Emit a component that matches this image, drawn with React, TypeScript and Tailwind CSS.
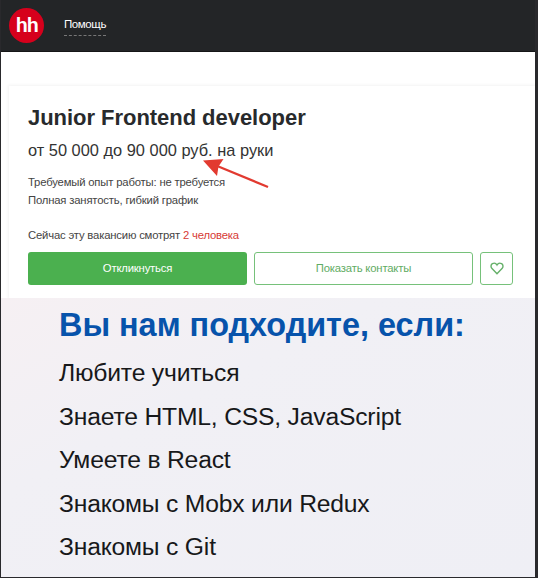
import React from "react";

function Logo() {
  return (
    <div className="flex size-[35px] shrink-0 items-center justify-center rounded-full bg-[#d6001c]">
      <span className="pl-px font-['Roboto',sans-serif] text-[21px] font-semibold leading-none tracking-[-0.7px] text-white">
        hh
      </span>
    </div>
  );
}

function Header() {
  return (
    <header className="flex h-[52px] shrink-0 items-start border-b border-[#151617] bg-[#232527] pl-2 pt-2">
      <Logo />
      <a className="ml-5 mt-2 h-5 border-b border-dashed border-[#777] text-[11.5px] leading-4 tracking-[-0.4px] text-white">
        Помощь
      </a>
    </header>
  );
}

function Arrow() {
  return (
    <svg
      className="absolute left-[191px] top-[71px]"
      width="72"
      height="34"
      viewBox="200 157 72 34"
      fill="none"
    >
      <path d="M216 165.5 268 187" stroke="#e23a30" strokeWidth="2.2" />
      <path d="M203 160.5 223.5 159 218.5 166.5 217 176Z" fill="#e23a30" />
    </svg>
  );
}

function Vacancy() {
  return (
    <section className="relative ml-2 mt-[34px] h-[212px] shrink-0 bg-white pl-[19px] shadow-[0_0_3px_1px_rgba(0,0,0,0.05)]">
      <h1 className="pt-[18px] text-[22px] font-bold leading-[28px] tracking-[-0.04px] text-[#282a2c]">
        Junior Frontend developer
      </h1>
      <p className="mt-[8px] text-[16.4px] leading-5 text-[#333]">от 50 000 до 90 000 руб. на руки</p>
      <p className="mt-[13px] text-[11.3px] leading-[18px] tracking-[-0.18px] text-[#444]">
        Требуемый опыт работы: не требуется
        <br />
        Полная занятость, гибкий график
      </p>
      <p className="mt-[17px] text-[11.3px] leading-[18px] tracking-[-0.18px] text-[#444]">
        Сейчас эту вакансию смотрят <span className="text-[#d63a36]">2 человека</span>
      </p>
      <div className="mt-2 flex gap-[7px] text-[11.3px] tracking-[-0.18px]">
        <button className="h-[33px] w-[219px] rounded-[3px] bg-[#4bb04f] text-white">Откликнуться</button>
        <button className="h-[33px] w-[219px] rounded-[3px] border border-[#76c17a] text-[#5fac63]">
          Показать контакты
        </button>
        <button className="flex size-[33px] items-center justify-center rounded-[3px] border border-[#76c17a]">
          <svg width="14" height="13" viewBox="0 0 14 13" fill="none">
            <path
              d="M7 11.8 2 6.6C.5 5 .8 2.6 2.4 1.7 4 .8 6 1.3 7 3 8 1.3 10 .8 11.6 1.7 13.2 2.6 13.5 5 12 6.6Z"
              stroke="#65b069"
              strokeWidth="1.4"
            />
          </svg>
        </button>
      </div>
      <Arrow />
    </section>
  );
}

const requirements = [
  "Любите учиться",
  "Знаете HTML, CSS, JavaScript",
  "Умеете в React",
  "Знакомы с Mobx или Redux",
  "Знакомы с Git",
];

function Requirements() {
  return (
    <section className="relative flex-1 bg-linear-to-br from-[#f6f0f3] via-[#f1f0f5] via-35% to-[#efeff5] pl-[58px]">
      <h2 className="pt-[7px] text-[32.4px] font-bold leading-10 text-[#0753ab]">Вы нам подходите, если:</h2>
      <ul className="mt-[6px] text-[24.7px] leading-[43.6px] tracking-[-0.2px] text-[#17181a]">
        {requirements.map((text) => (
          <li key={text}>{text}</li>
        ))}
      </ul>
    </section>
  );
}

export default function App() {
  return (
    <div className="flex h-[578px] w-[538px] flex-col overflow-hidden border-b border-l border-r-[3px] border-[#29292c] bg-white font-['Liberation_Sans',Arial,sans-serif]">
      <Header />
      <Vacancy />
      <Requirements />
    </div>
  );
}
